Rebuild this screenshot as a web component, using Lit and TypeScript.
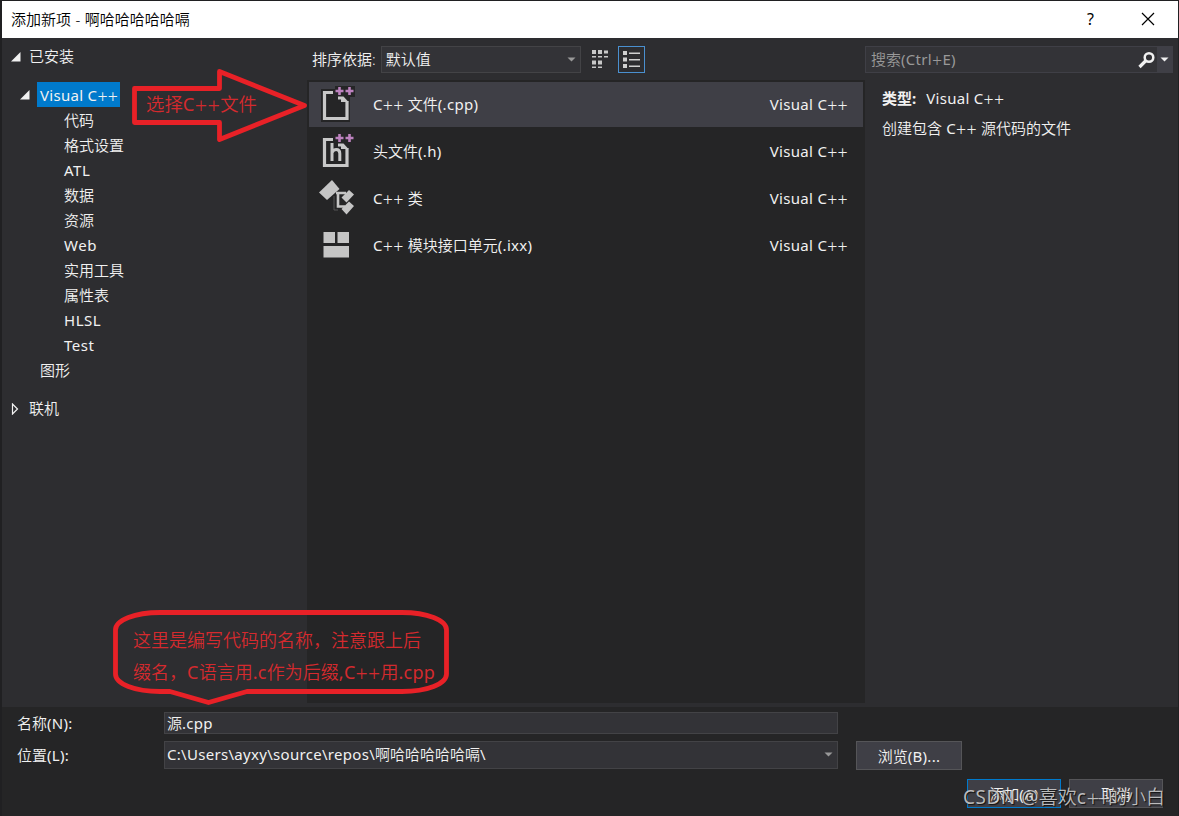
import { LitElement, html, css, svg } from "lit";
import { customElement } from "lit/decorators.js";

/* Splits mixed text so that Latin runs and plus signs get their own tracking. */
const mix = (s: string) =>
  s
    .split(/([\x20-\x2a\x2c-\x7e]+|\++)/)
    .filter(Boolean)
    .map((p) =>
      p[0] === "+"
        ? html`<span class="plus">${p}</span>`
        : p.charCodeAt(0) < 127
          ? html`<span class="latin">${p}</span>`
          : p
    );

const pluses = svg`<path d="M29.200 1h2.600v2.700h2.700v2.600h-2.700v2.700h-2.600v-2.700h-2.700v-2.600h2.700zM19.200 1h2.600v2.700h2.700v2.600h-2.700v2.700h-2.600v-2.700h-2.700v-2.600h2.700z" fill="#bd82bf"/>`;
const page = svg`
  <path d="M2 3h14v-3h20v11h-5v25H2z" fill="#252526"/>
  <path d="M14 6.500H5.500v26h22.500V15" fill="none" stroke="#c8c8c8" stroke-width="3.200"/>
  <path d="M19 10.500h5.500l5 5.500h-10.500z" fill="#c8c8c8"/>
  <path d="M18 13.500h4v3h-4z" fill="#252526"/>`;

const icons: Record<string, unknown> = {
  cpp: svg`${page}${pluses}`,
  h: svg`${page}${pluses}<path d="M13 10v18M13 19.500q1.500-3 4.300-3 3.500 0 3.500 4V28" fill="none" stroke="#c8c8c8" stroke-width="3"/>`,
  cls: svg`<path d="M0 12.500 13 0l7.500 9L8 20z" fill="#c5c5c5"/>
    <path d="M17 13h10M19 13v13.500H26" fill="none" stroke="#c5c5c5" stroke-width="2.600"/>
    <path d="m22.500 17.500 7.500-7.500 5 4.500-7.500 8zM22.500 29l7.500-7.500 5 4.500-7.500 8.500z" fill="#c5c5c5"/>
    <path d="M15 16v14h4" fill="none" stroke="#555" stroke-width="1"/>`,
  mod: svg`<path d="M4.500 5h11.500v11H4.500zM18.500 5h11.500v11H18.500zM4.500 19h25.500v11.500H4.500z" fill="#c5c5c5"/>`,
};

const rows = [
  ["cpp", "C++ 文件(.cpp)"],
  ["h", "头文件(.h)"],
  ["cls", "C++ 类"],
  ["mod", "C++ 模块接口单元(.ixx)"],
];

@customElement("app-root")
export class AppRoot extends LitElement {
  static styles = css`
    :host {
      display: block; position: relative; width: 1179px; height: 816px; overflow: hidden;
      box-sizing: border-box; padding: 1px 1px 0 2px; background: #202022;
      font: 350 15px/25px "Noto Sans", "Noto Sans CJK SC", sans-serif; color: #f1f1f1;
    }
    * { box-sizing: border-box; }
    svg { display: block; flex: none; }
    .latin { letter-spacing: 0.3px; font-weight: 400; }
    .plus { font-size: 1.18em; line-height: 1; letter-spacing: 0.3px; font-weight: 350; vertical-align: -0.13em; }
    .title {
      height: 37px; background: #fff; color: #000; display: flex; align-items: center;
      padding: 0 23px 1px 9px; font-size: 15px;
    }
    .title .name { flex: 1; word-spacing: 0.6px; }
    .title .help { margin-right: 47px; font-size: 16px; font-weight: 400; }
    .main { display: flex; height: 669px; background: #2d2d30; }
    .tree { width: 305px; padding-top: 6px; }
    .node { display: flex; height: 25px; align-items: center; white-space: nowrap; }
    .root { padding-left: 9px; gap: 8px; }
    .vc { margin: 13px 0 0; padding-left: 18px; gap: 7px; }
    .picked { background: #007acc; height: 25px; width: 83px; padding: 1px 0 0 3px; }
    .leaf { padding-left: 62px; }
    .leaf .latin { letter-spacing: 0.55px; }
    .leaves { padding-top: 1px; }
    .graph { padding-left: 38px; }
    .online { margin-top: 13px; }
    .center { width: 558px; }
    .sort { height: 42px; display: flex; align-items: center; padding-left: 5px; }
    .combo {
      background: #333337; border: 1px solid #434346; display: flex; align-items: center;
      justify-content: space-between; padding: 0 4px;
    }
    .sort .combo { width: 200px; height: 27px; margin-left: 5px; }
    .grid { margin-left: 10px; }
    .listbtn { width: 27px; height: 27px; border: 1px solid #4a90d0; margin-left: 9px; display: grid; place-items: center; }
    .list { background: #252526; height: 623px; padding-top: 2px; }
    .item { height: 47px; display: flex; align-items: center; padding: 0 15px 0 10px; margin: 0 2px; }
    .item svg { margin-top: -2px; }
    .item .label { flex: 1; padding-left: 18px; }
    .sel { background: #3f3f46; height: 45px; margin-bottom: 1px; }
    .side { width: 311px; padding: 8px 3px 0 0; }
    .search { height: 27px; background: #333337; border: 1px solid #3f3f46; display: flex; align-items: center; padding-left: 5px; color: #999; }
    .search .hint { flex: 1; }
    .drop { width: 15px; height: 25px; margin-left: 1px; background: #3f3f46; display: grid; place-items: center; }
    .info { padding: 13px 0 0 17px; }
    .type { display: flex; gap: 10px; margin-bottom: 5px; }
    .type b { font-weight: 700; }
    .bottom { height: 109px; background: #252526; padding: 5px 15px 0 15px; }
    .field { display: flex; align-items: center; height: 22px; }
    .field .cap { width: 147px; }
    .input { width: 674px; padding: 0 4px 0 2px; }
    .short { height: 22px; }
    .loc { margin-top: 6px; height: 30px; }
    .loc .input { height: 28px; margin-top: -1px; }
    .btn { background: #3f3f46; border: 1px solid #555558; display: flex; align-items: center; justify-content: center; }
    .browse { width: 106px; height: 29px; margin-left: 18px; padding-top: 2px; }
    .actions { display: flex; justify-content: flex-end; gap: 8px; margin-top: 9px; }
    .actions .btn { width: 94px; height: 29px; padding-top: 2px; }
    .actions .add { border-color: #007acc; }
    .over { position: absolute; white-space: nowrap; color: #d42a2e; }
    .shapes { position: absolute; left: 0; top: 0; pointer-events: none; }
    .pick { left: 146px; top: 91px; font-size: 18.400px; }
    .note { left: 133px; top: 624px; font-size: 18px; line-height: 32px; }
    .mark { left: 963px; top: 785px; font-size: 19px; color: rgba(220, 220, 220, 0.82); text-shadow: 1px 1px 1px #111; }
    .mark .latin { letter-spacing: 0.5px; }
    .mark .plus { letter-spacing: -2px; }
  `;

  private arrow(color: string) {
    return html`<svg width="9" height="5" viewBox="0 0 9 5"><path d="M.5.500h8L4.500 4.500z" fill=${color} /></svg>`;
  }

  private open() {
    return html`<svg width="10" height="10" viewBox="0 0 10 10"><path d="M9.500 0v9.500H0z" fill="#f1f1f1" /></svg>`;
  }

  render() {
    const leaves = ["代码", "格式设置", "ATL", "数据", "资源", "Web", "实用工具", "属性表", "HLSL", "Test"];
    return html`
      <div class="title">
        <span class="name">添加新项 - 啊哈哈哈哈哈嗝</span><span class="help">?</span>
        <svg width="14" height="14" viewBox="0 0 14 14"><path d="m1 1 12 12M13 1 1 13" stroke="#000" stroke-width="1.200" /></svg>
      </div>
      <div class="main">
        <div class="tree">
          <div class="node root">${this.open()}<span>已安装</span></div>
          <div class="node vc">${this.open()}<span class="picked">${mix("Visual C++")}</span></div>
          <div class="leaves">${leaves.map((l) => html`<div class="node leaf"><span>${mix(l)}</span></div>`)}</div>
          <div class="node graph">图形</div>
          <div class="node root online">
            <svg width="10" height="12" viewBox="0 0 10 12"><path d="M1.500 1v10L6.500 6z" fill="none" stroke="#f1f1f1" stroke-width="1.200" /></svg>
            <span>联机</span>
          </div>
        </div>
        <div class="center">
          <div class="sort">
            <span>排序依据:</span>
            <div class="combo"><span>默认值</span>${this.arrow("#999")}</div>
            <svg class="grid" width="18" height="20" viewBox="0 0 18 20" fill="#c8c8c8">
              <path d="M1 1h4v4H1zM7 1h4v4H7zM13 1.500h4v3h-4zM1 11.500h4v4H1zM7 11.500h4v4H7z" />
              <path d="M1 7h4v1.500H1zM7 7h4v1.500H7zM13 7h4v1.500h-4zM1 17.500h4V19H1zM7 17.500h4V19H7z" />
            </svg>
            <div class="listbtn">
              <svg width="19" height="19" viewBox="0 0 19 19" fill="#d0d0d0">
                <path d="M1 1h4v4H1zM1 7.500h4v4H1zM1 14h4v4H1zM7 2.500h11V4H7zM7 9h11v1.500H7zM7 15.500h11V17H7z" />
              </svg>
            </div>
          </div>
          <div class="list">
            ${rows.map(
              ([icon, label], i) => html`<div class="item ${i === 0 ? "sel" : ""}">
                <svg width="36" height="36" viewBox="0 0 36 36">${icons[icon]}</svg>
                <span class="label">${mix(label)}</span><span>${mix("Visual C++")}</span>
              </div>`
            )}
          </div>
        </div>
        <div class="side">
          <div class="search">
            <span class="hint">${mix("搜索(Ctrl+E)")}</span>
            <svg width="18" height="18" viewBox="0 0 18 18" fill="none" stroke="#f1f1f1">
              <circle cx="11" cy="6.500" r="4.300" stroke-width="2.500" /><path d="M8 9.500 1.500 16" stroke-width="3.200" />
            </svg>
            <div class="drop">${this.arrow("#f1f1f1")}</div>
          </div>
          <div class="info">
            <div class="type"><b>类型:</b><span>${mix("Visual C++")}</span></div>
            <div>${mix("创建包含 C++ 源代码的文件")}</div>
          </div>
        </div>
      </div>
      <div class="bottom">
        <div class="field"><span class="cap">${mix("名称(N):")}</span><div class="combo input short"><span>${mix("源.cpp")}</span></div></div>
        <div class="field loc">
          <span class="cap">${mix("位置(L):")}</span>
          <div class="combo input"><span>${mix("C:\\Users\\ayxy\\source\\repos\\啊哈哈哈哈哈嗝\\")}</span>${this.arrow("#999")}</div>
          <div class="btn browse">${mix("浏览(B)...")}</div>
        </div>
        <div class="actions"><div class="btn add">${mix("添加(A)")}</div><div class="btn">取消</div></div>
      </div>
      <svg class="shapes" width="1179" height="816" viewBox="0 0 1179 816" fill="none" stroke="#e82127" stroke-width="4.800" stroke-linejoin="round">
        <path d="M134.500 88.500H219.500V71.500L304.500 105.500 219.500 139.500V122.500H134.500z" />
        <path d="M115.500 630C115.500 620 135 612.500 160 612.500H402C427 612.500 446.500 620 446.500 630V674C446.500 684 427 691.500 402 691.500H247L208.500 702.500 170 691.500H160C135 691.500 115.500 684 115.500 674z" />
      </svg>
      <div class="over pick">${mix("选择C++文件")}</div>
      <div class="over note">这里是编写代码的名称，注意跟上后<br />${mix("缀名，C语言用.c作为后缀,C++用.cpp")}</div>
      <div class="over mark">${mix("CSDN @喜欢c++的小白")}</div>
    `;
  }
}
